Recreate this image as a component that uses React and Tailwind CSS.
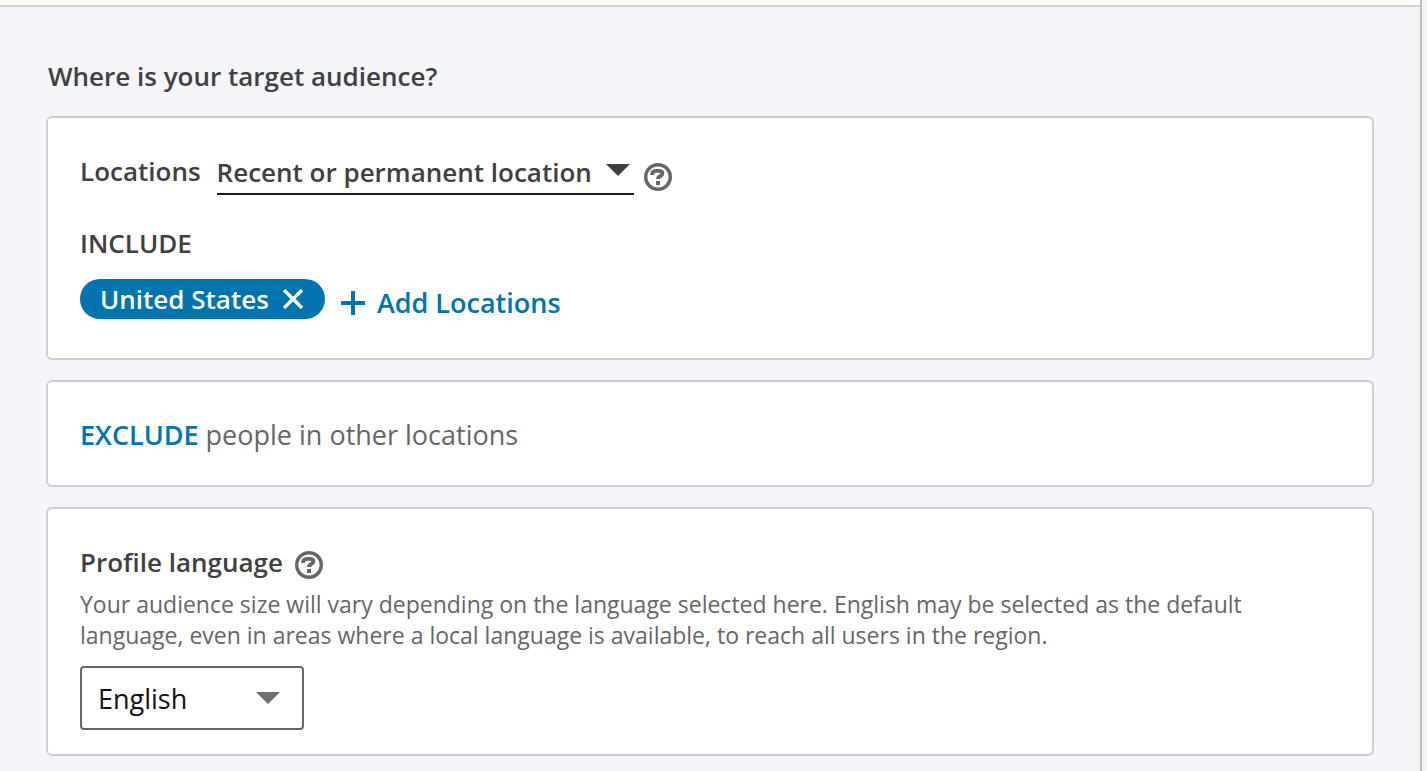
const cardClass = "rounded-md border-2 border-[#cdcfd2] bg-white px-8";

function HelpIcon() {
  return (
    <svg viewBox="0 0 28 28" className="size-7" fill="none" aria-hidden="true">
      <circle cx="14" cy="14" r="12.3" stroke="#666" strokeWidth="3.4" />
      <path d="M8 12C8 9 9.600 7.800 12 7.800h3c2.400 0 3.400 1 3.400 2.700 0 3-4.400 2-4.400 5.500" stroke="#666" strokeWidth="3.8" />
      <rect x="12" y="18" width="4" height="4" fill="#666" />
    </svg>
  );
}

function Caret({ className }) {
  return (
    <svg viewBox="0 0 24 12" className={`pointer-events-none absolute h-3 w-6 ${className}`} aria-hidden="true">
      <path d="M0 0h24L12 12z" fill="currentColor" />
    </svg>
  );
}

function Locations() {
  return (
    <section className={`${cardClass} pt-[33px] pb-[35px]`}>
      <div className="flex items-start">
        <label htmlFor="location-type" className="mt-0.5 mr-4 leading-9 font-semibold">
          Locations
        </label>
        <div className="relative mr-2.5">
          <select
            id="location-type"
            className="h-11 appearance-none border-b-2 border-[#1d1d1d] bg-transparent pr-[41px] font-semibold"
          >
            <option>Recent or permanent location</option>
            <option>Permanent location</option>
          </select>
          <Caret className="top-[13px] right-1 text-[#404040]" />
        </div>
        <button type="button" aria-label="About locations" className="mt-3">
          <HelpIcon />
        </button>
      </div>
      <h2 className="mt-[30px] leading-9 font-semibold">INCLUDE</h2>
      <div className="mt-[18px] flex items-start gap-4">
        <button
          type="button"
          aria-label="Remove United States"
          className="flex h-10 items-center gap-3.5 rounded-full bg-[#0073b1] pr-[22px] pl-5 font-semibold text-white"
        >
          United States
          <svg viewBox="0 0 20 20" className="size-5" aria-hidden="true">
            <path d="m1 1 18 18M19 1 1 19" stroke="currentColor" strokeWidth="3.4" />
          </svg>
        </button>
        <button type="button" className="mt-1 flex h-10 items-center gap-3 text-[27px] font-semibold text-[#0073b1]">
          <svg viewBox="0 0 24 24" className="size-6" aria-hidden="true">
            <path d="M12 0v24M0 12h24" stroke="currentColor" strokeWidth="4" />
          </svg>
          Add Locations
        </button>
      </div>
    </section>
  );
}

function ProfileLanguage() {
  return (
    <section className={`${cardClass} pt-[35px] pb-6`}>
      <div className="flex items-center gap-3">
        <label htmlFor="profile-language" className="leading-9 font-semibold">
          Profile language
        </label>
        <button type="button" aria-label="About profile language" className="mt-1.5">
          <HelpIcon />
        </button>
      </div>
      <p className="mt-[9px] max-w-[1180px] text-[23px] leading-[31px] text-[#666]">
        Your audience size will vary depending on the language selected here. English may be selected as the default
        language, even in areas where a local language is available, to reach all users in the region.
      </p>
      <div className="relative mt-[15px] w-56">
        <select
          id="profile-language"
          className="h-16 w-full appearance-none rounded border-2 border-[#666] bg-white px-4 pt-0.5 text-[27px] text-[#111]"
        >
          <option>English</option>
          <option>Spanish</option>
          <option>French</option>
        </select>
        <Caret className="top-[26px] right-6 text-[#707070]" />
      </div>
    </section>
  );
}

export default function App() {
  return (
    <div className="min-h-screen bg-[#f3f3f3] pr-[5px] font-['Open_Sans','Noto_Sans',sans-serif] text-[26px] text-[#404040]">
      <div className="min-h-screen border-r-2 border-[#bfc0c1] bg-[#f3f5f8]">
        <div className="h-[7px] border-b-2 border-[#d3d4d6] bg-white" />
        <main className="px-[46px] pt-[49px] pb-4">
          <h1 className="pl-0.5 leading-10 font-semibold">Where is your target audience?</h1>
          <div className="mt-5 flex flex-col gap-5">
            <Locations />
            <section className={`${cardClass} pt-[33px] pb-[30px]`}>
              <p className="text-[27px] leading-10 text-[#666]">
                <a href="#exclude" className="font-semibold text-[#0073b1]">
                  EXCLUDE
                </a>{" "}
                people in other locations
              </p>
            </section>
            <ProfileLanguage />
          </div>
        </main>
      </div>
    </div>
  );
}
